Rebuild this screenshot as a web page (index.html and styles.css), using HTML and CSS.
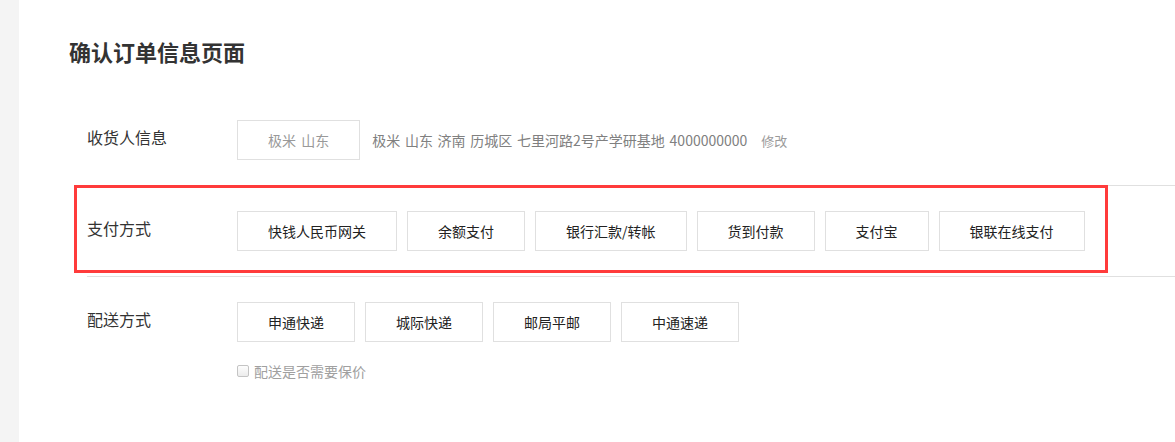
FILE: index.html
```html
<!DOCTYPE html>
<html lang="zh-CN">
<head>
<meta charset="utf-8">
<title>确认订单信息页面</title>
<link rel="stylesheet" href="styles.css">
</head>
<body>
<div class="layout">
  <aside class="side"></aside>
  <main class="main">
    <h1 class="title">确认订单信息页面</h1>

    <section class="row">
      <div class="label">收货人信息</div>
      <div class="controls">
        <div class="line">
          <span class="opt opt-muted">极米 山东</span>
          <span class="addr">极米 山东 济南 历城区 七里河路2号产学研基地 4000000000</span>
          <a class="edit">修改</a>
        </div>
      </div>
    </section>

    <section class="row row-pay">
      <div class="label">支付方式</div>
      <div class="controls">
        <div class="opts">
          <span class="opt">快钱人民币网关</span>
          <span class="opt">余额支付</span>
          <span class="opt">银行汇款/转帐</span>
          <span class="opt">货到付款</span>
          <span class="opt">支付宝</span>
          <span class="opt">银联在线支付</span>
        </div>
      </div>
      <div class="highlight"></div>
    </section>

    <section class="row">
      <div class="label">配送方式</div>
      <div class="controls">
        <div class="opts">
          <span class="opt">申通快递</span>
          <span class="opt">城际快递</span>
          <span class="opt">邮局平邮</span>
          <span class="opt">中通速递</span>
        </div>
        <label class="check"><span class="box"></span>配送是否需要保价</label>
      </div>
    </section>
  </main>
</div>
</body>
</html>
```

FILE: styles.css
```css
html, body {
  margin: 0;
  padding: 0;
  background: #fff;
}
body {
  font-family: "Noto Sans CJK SC", "Microsoft YaHei", "Liberation Sans", sans-serif;
  color: #333;
}
.layout {
  display: flex;
  min-height: 442px;
}
.side {
  width: 19px;
  flex: none;
  background: #f4f4f4;
}
.main {
  flex: 1;
  padding: 36px 0 0 50px;
  overflow: hidden;
}
.title {
  margin: 0 0 29px 0;
  font-size: 22px;
  line-height: 30px;
  font-weight: bold;
  color: #333;
}
.row {
  position: relative;
  display: flex;
  align-items: flex-start;
  margin-left: 18px;
  padding: 25px 0;
}
.row-pay {
  border-top: 1px solid #e0e0e0;
  border-bottom: 1px solid #e0e0e0;
}
.label {
  width: 150px;
  flex: none;
  font-size: 16px;
  line-height: 34px;
  color: #333;
}
.controls {
  display: flex;
  flex-direction: column;
}
.line {
  display: flex;
  align-items: center;
}
.opts {
  display: flex;
  gap: 10px;
}
.opt {
  display: block;
  border: 1px solid #e0e0e0;
  padding: 0 30px;
  height: 38px;
  line-height: 38px;
  font-size: 14px;
  color: #222;
  white-space: nowrap;
  background: #fff;
}
.opt-muted {
  color: #999;
  word-spacing: 2px;
}
.addr {
  margin-left: 12px;
  font-size: 14px;
  color: #808080;
  white-space: nowrap;
  word-spacing: 1.6px;
}
.edit {
  margin-left: 14px;
  font-size: 13px;
  color: #9a9a9a;
}
.check {
  display: flex;
  align-items: center;
  margin-top: 19px;
  font-size: 14px;
  line-height: 20px;
  color: #a0a0a0;
}
.box {
  width: 10px;
  height: 10px;
  border: 1px solid #c4c4c4;
  border-radius: 2px;
  background: linear-gradient(#fdfdfd, #ececec);
  margin-right: 5px;
}
.highlight {
  position: absolute;
  left: -13px;
  top: -1px;
  width: 1034px;
  height: 88px;
  box-sizing: border-box;
  border: 3px solid #ff3b3b;
  pointer-events: none;
}
```
